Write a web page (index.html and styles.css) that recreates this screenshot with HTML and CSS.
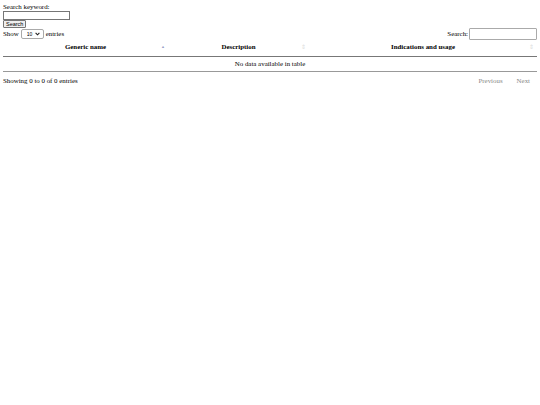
FILE: index.html
```html
<!DOCTYPE html>
<html>
<head>
<meta charset="utf-8">
<link rel="stylesheet" href="styles.css">
</head>
<body>
<div class="form">
  <label class="kw-label">Search keyword:</label>
  <input class="kw-input" type="text">
  <button class="kw-btn">Search</button>
</div>
<div class="wrapper">
  <div class="top">
    <div class="length">Show <span class="sel-wrap"><select class="len-select"><option>10</option></select><svg class="chev" width="5" height="4" viewBox="0 0 5 4"><path d="M0.6 0.8 L2.5 2.8 L4.4 0.8" fill="none" stroke="#222" stroke-width="1.1"/></svg></span> entries</div>
    <div class="filter">Search:<input class="filter-input" type="text"></div>
  </div>
  <table class="table">
    <thead>
      <tr>
        <th class="c1 sorted">Generic name<span class="sort asc">&#9650;</span></th>
        <th class="c2">Description<span class="sort both">&#8661;</span></th>
        <th class="c3">Indications and usage<span class="sort both">&#8661;</span></th>
      </tr>
    </thead>
    <tbody>
      <tr><td colspan="3" class="empty">No data available in table</td></tr>
    </tbody>
  </table>
  <div class="bottom">
    <div class="info">Showing 0 to 0 of 0 entries</div>
    <div class="paginate"><span class="pg">Previous</span><span class="pg">Next</span></div>
  </div>
</div>
</body>
</html>
```
FILE: styles.css
```css
html, body { background: #fff; }
body {
  margin: 3px;
  font-family: "Liberation Serif", "Times New Roman", serif;
  font-size: 6.9px;
  line-height: 8px;
  color: #000;
}
.form { display: flex; flex-direction: column; align-items: flex-start; }
.kw-label { line-height: 8px; }
.kw-input {
  width: 67px; height: 9px; box-sizing: border-box;
  border: 1px solid #767676; padding: 0; margin: 0;
  font-size: 6px;
}
.kw-btn {
  height: 8px; box-sizing: border-box; padding: 0 2px; margin: 0;
  font-family: "Liberation Sans", Arial, sans-serif; font-size: 5.5px;
  line-height: 6px;
  border: 1px solid #767676; background: #efefef; border-radius: 1px;
  color: #000;
}
.top { display: flex; justify-content: space-between; align-items: center; }
.length { display: flex; align-items: center; gap: 2px; }
.sel-wrap { position: relative; display: inline-flex; }
.len-select {
  appearance: none; -webkit-appearance: none;
  width: 23px; height: 10px; box-sizing: border-box; margin: 0;
  font-size: 5px; line-height: 8px; padding: 0 0 0 5px;
  border: 1px solid #aaa; border-radius: 2px; background: #fff; color: #000;
  font-family: "Liberation Sans", Arial, sans-serif;
}
.chev { position: absolute; right: 4px; top: 3px; pointer-events: none; }
.filter { display: flex; align-items: center; gap: 1px; }
.filter-input {
  width: 68px; height: 12px; box-sizing: border-box; margin: 0;
  border: 1px solid #aaa; border-radius: 1px; padding: 0;
}
.table {
  width: 100%; border-collapse: collapse;
  border-bottom: 1px solid #999;
}
.table th {
  font-weight: bold; padding: 3px 6px 5px; text-align: center;
  border-bottom: 1px solid #777; position: relative; color: #000;
}
.c1 { width: 153px; }
.c2 { width: 129px; }
.sort {
  position: absolute; right: 3px; top: 3px; font-size: 4px; font-weight: normal;
}
.sort.asc { color: #9aa0c8; }
.sort.both { color: #ddd; font-size: 5.5px; top: 3px; }
.empty { text-align: center; padding: 3px 6px 3px; }
.bottom { display: flex; justify-content: space-between; align-items: center; padding-top: 5px; }
.paginate { display: flex; }
.pg { color: #888; padding: 0 7px; }
```
